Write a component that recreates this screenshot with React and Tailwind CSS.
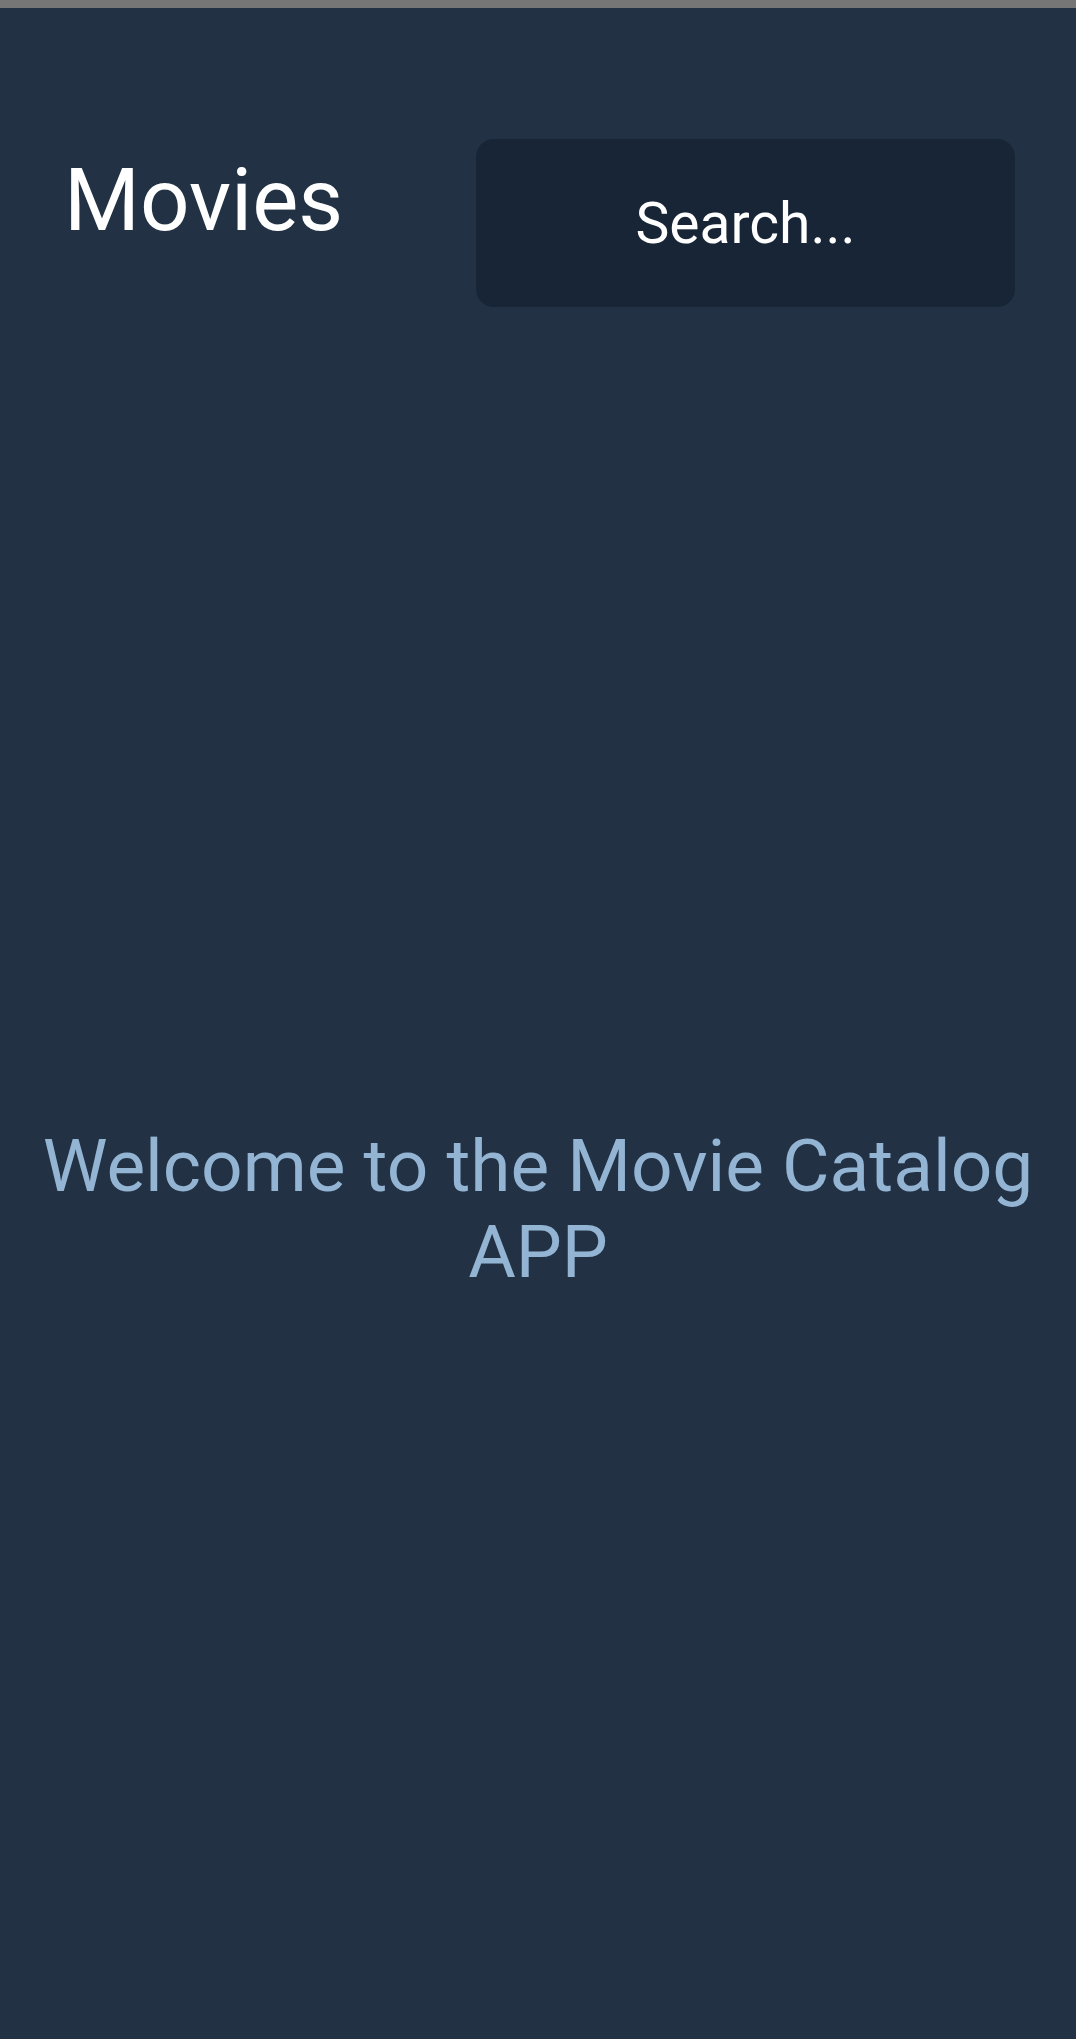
import { useState } from 'react'

export default function App() {
  const [query, setQuery] = useState('')

  return (
    <div className="min-h-screen bg-[#223244] border-t-8 border-[#767676] font-['Roboto',_'Noto_Sans',_sans-serif]">
      <header className="flex items-start justify-between pl-[64px] pr-[61px] pt-[131px]">
        <h1 className="mt-[11px] text-[87px] leading-[1.172] font-normal text-white">Movies</h1>
        <input
          value={query}
          onChange={e => setQuery(e.target.value)}
          placeholder="Search..."
          className="w-[539px] h-[168px] rounded-[18px] bg-[#172536] text-center text-[57px] text-white placeholder:text-white outline-none"
        />
      </header>

      <main className="pt-[816px] pb-10 px-4">
        <p className="text-center text-[73px] leading-[1.18] text-[#94b4d4]">
          Welcome to the Movie Catalog APP
        </p>
      </main>
    </div>
  )
}
